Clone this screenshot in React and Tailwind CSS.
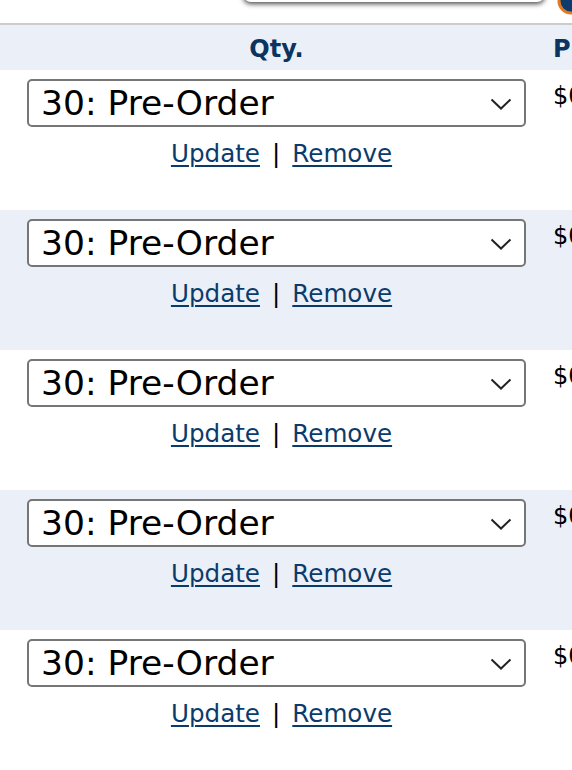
import React from "react";

const rows = [0, 1, 2, 3, 4];

function QtyRow({ shaded }) {
  return (
    <div className={`flex h-[140px] ${shaded ? "bg-[#ebf0f8]" : "bg-white"}`}>
      <div className="w-[553px] shrink-0 flex flex-col items-center pt-[9px]">
        <div className="relative w-[499px] h-[48px] border-2 border-[#767676] rounded-[5px] bg-white flex items-center pl-[12px]">
          <span className="text-[34.5px] leading-none text-black">30: Pre-Order</span>
          <svg className="absolute right-[12px] top-[17px]" width="22" height="12" viewBox="0 0 22 12" fill="none">
            <path d="M1.5 1.5 L11 10.5 L20.5 1.5" stroke="#222" strokeWidth="2" />
          </svg>
        </div>
        <div className="mt-[13px] pl-[10px] flex gap-[12px] text-[24.6px] leading-[28px] text-[#0b3b6b]">
          <a href="#" className="underline underline-offset-[3px] decoration-2">Update</a>
          <span className="text-black">|</span>
          <a href="#" className="underline underline-offset-[3px] decoration-2">Remove</a>
        </div>
      </div>
      <div className="pt-[12px] text-[24px] leading-[28px] text-black whitespace-nowrap">$0.00</div>
    </div>
  );
}

export default function App() {
  return (
    <div className="w-[572px] h-[770px] overflow-hidden bg-white" style={{ fontFamily: '"DejaVu Sans", Verdana, sans-serif' }}>
      <div className="relative h-[23px] bg-white">
        <div className="absolute left-[243px] top-[-20px] w-[302px] h-[22px] rounded-b-[8px] bg-white shadow-[0_2px_5px_rgba(0,0,0,0.7)]" />
        <svg className="absolute left-[556px] top-[-14px]" width="30" height="30" viewBox="0 0 30 30">
          <circle cx="15" cy="15" r="12" fill="#0d3b6e" stroke="#e3781f" strokeWidth="3" />
        </svg>
      </div>
      <div className="h-[2px] bg-[#cccccc]" />
      <div className="flex h-[45px] bg-[#ebf0f8] font-bold text-[24px] text-[#0b3561] items-center pt-[2px]">
        <div className="w-[553px] shrink-0 text-center">Qty.</div>
        <div className="whitespace-nowrap">Price</div>
      </div>
      {rows.map((r) => (
        <QtyRow key={r} shaded={r % 2 === 1} />
      ))}
    </div>
  );
}
